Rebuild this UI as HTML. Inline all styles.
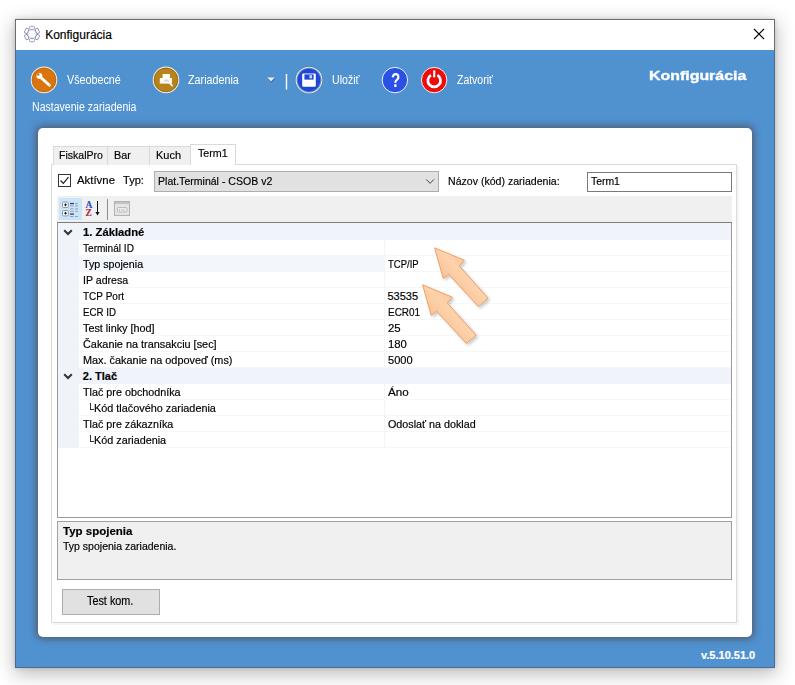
<!DOCTYPE html>
<html><head><meta charset="utf-8"><title>Konfigurácia</title>
<style>
*{box-sizing:border-box;margin:0;padding:0}
html,body{width:795px;height:685px;overflow:hidden;background:#fff;font-family:"Liberation Sans",sans-serif;}
body{position:relative}
.abs,.t,div,svg{position:absolute}
.t{white-space:pre;transform-origin:0 50%;-webkit-text-stroke:.18px currentColor;}
#win{left:15px;top:19px;width:760px;height:649px;background:#5091d0;border:1px solid #4a6b94;border-top-color:#6c6c6c;box-shadow:0 5px 18px 1px rgba(0,0,0,.27),0 0 4px rgba(0,0,0,.15);}
#title{left:16px;top:20px;width:758px;height:30px;background:#fff}
#panel{left:38px;top:128px;width:714px;height:509px;background:#fff;border-radius:5px;box-shadow:0 0 7px 1.5px rgba(80,86,100,.9);}
#pane{left:51px;top:164px;width:686px;height:459px;border:1px solid #dadada;background:#fff}
#pane2{left:737px;top:166px;width:2px;height:459px;background:#f5f5f5}
#pane3{left:53px;top:623px;width:686px;height:2px;background:#f5f5f5}
.tab{top:146px;height:19px;background:#f0f0f0;border:1px solid #d9d9d9;border-bottom:none}
#tabA{left:190px;top:144px;width:46px;height:21px;background:#fff;border:1px solid #d9d9d9;border-bottom:none}
#cb{left:58px;top:174px;width:13px;height:13px;border:1px solid #333;background:#fff}
#combo{left:154px;top:171px;width:285px;height:21px;background:#e1e1e1;border:1px solid #adadad}
#tbox{left:587px;top:172px;width:145px;height:20px;background:#fff;border:1px solid #7a7a7a}
#pgbar{left:57px;top:196px;width:675px;height:26px;background:#f0f0f0}
#pgsel{left:59px;top:198px;width:23px;height:22px;background:#cce4f7;}
#pgsep{left:107px;top:199px;width:1px;height:21px;background:#8d8d8d}
#grid{left:57px;top:222px;width:675px;height:296px;border:1px solid #9a9a9a;border-top-color:#7d7d7d;background:#fff}
#margin{left:58px;top:223px;width:21px;height:225px;background:#f0f4fa}
.cat{left:58px;width:673px;height:17px;background:#f0f4fa}
.hl{left:79px;width:652px;height:1px;background:#f5f7fb}
#vl{left:384px;top:240px;width:1px;height:208px;background:#f1f4fa}
#selrow{left:79px;top:256px;width:305px;height:15px;background:#f3f6fb}
#desc{left:57px;top:521px;width:675px;height:59px;background:#f0f0f0;border:1px solid #a0a0a0}
#btn{left:62px;top:589px;width:98px;height:26px;background:#e1e1e1;border:1px solid #adadad}
#tbl,#tbr{top:19px;width:1px;height:31px;background:#6a6d72}
#tbl{left:15px}#tbr{left:774px}
.ell{left:90px;width:4px;height:7px;border-left:1px solid #333;border-bottom:1px solid #333}

</style></head>
<body>
<div id="win"></div>
<div id="title"></div><div id="tbl"></div><div id="tbr"></div>
<svg id="ticon" style="left:22px;top:24px" width="20" height="20" viewBox="0 0 20 20" fill="none" stroke="#8c94b4" stroke-width="0.9">
 <g transform="translate(10,10)">
  <circle r="4.3" stroke="#b4bad2" stroke-width=".8"/>
  <rect x="-2.5" y="-7.7" width="5" height="3.1" rx="1.1"/>
  <rect x="-2.5" y="-7.7" width="5" height="3.1" rx="1.1" transform="rotate(60)"/>
  <rect x="-2.5" y="-7.7" width="5" height="3.1" rx="1.1" transform="rotate(120)"/>
  <rect x="-2.5" y="-7.7" width="5" height="3.1" rx="1.1" transform="rotate(180)"/>
  <rect x="-2.5" y="-7.7" width="5" height="3.1" rx="1.1" transform="rotate(240)"/>
  <rect x="-2.5" y="-7.7" width="5" height="3.1" rx="1.1" transform="rotate(300)"/>
 </g>
</svg>
<svg id="xclose" style="left:753px;top:28px" width="12" height="12" viewBox="0 0 12 12" stroke="#000" stroke-width="1.1"><path d="M1 1L11 11M11 1L1 11"/></svg>

<!-- toolbar icons -->
<svg id="icons" style="left:15px;top:50px" width="500" height="60" viewBox="15 50 500 60">
 <!-- wrench -->
 <circle cx="44" cy="79.9" r="12.7" fill="#da750d" stroke="#f7e6cf" stroke-width="1.2"/>
 <circle cx="44" cy="79.9" r="11.9" fill="none" stroke="#9a4e04" stroke-width=".6" opacity=".75"/>
 <g fill="#fff" stroke="none">
   <path d="M40.6 77.2 L49.4 85.2" stroke="#fff" stroke-width="2.9" stroke-linecap="round"/>
   <circle cx="39.4" cy="75.9" r="2.9"/>
   <circle cx="38.2" cy="74.5" r="1.35" fill="#da750d"/>
   <circle cx="49.3" cy="85.1" r=".7" fill="#d8b890"/>
 </g>
 <!-- devices -->
 <circle cx="166" cy="79.9" r="12.7" fill="#b8821c" stroke="#f5ead2" stroke-width="1.2"/>
 <circle cx="166" cy="79.9" r="11.9" fill="none" stroke="#6e4a06" stroke-width=".6" opacity=".75"/>
 <g fill="#fffaf0">
  <rect x="162.6" y="74" width="7.3" height="4.5"/>
  <rect x="159.8" y="78" width="12.2" height="5.6"/>
  <path d="M167.2 80.2 L172.6 86.2" stroke="#fff" stroke-width="1.6"/>
  <path d="M165 79.6 l3 0 l1.6 1.8 l-6 0z" fill="#d8d0e8"/>
 </g>
 <!-- dropdown arrow -->
 <path d="M267.6 78.4 h7.6 l-3.8 4.4z" fill="#3a5c88" opacity=".8"/><path d="M267.3 77.5 h7.4 l-3.7 3.9z" fill="#e8edf5"/>
 <!-- separator -->
 <rect x="285.8" y="74" width="1.4" height="15.5" fill="#fff"/>
 <!-- save -->
 <circle cx="309" cy="80.1" r="13.5" fill="none" stroke="#1c3a78" stroke-width=".7" opacity=".55"/><circle cx="309" cy="80.1" r="12.9" fill="none" stroke="#ece6dc" stroke-width="1.1"/>
 <circle cx="309" cy="80.1" r="11.3" fill="#2046d8"/>
 <rect x="302.2" y="73.4" width="13.6" height="13.3" rx="1" fill="#fff"/>
 <rect x="304.4" y="74.4" width="9.2" height="5.2" fill="#2046d8"/>
 <rect x="309.4" y="75.2" width="2.6" height="3.2" fill="#c8d0f0"/>
 <!-- help -->
 <circle cx="394.9" cy="80.1" r="12.7" fill="#2a50e6" stroke="#eef0fa" stroke-width="1"/>
 <!-- close -->
 <circle cx="434.15" cy="80.1" r="12.7" fill="#ec0c0c" stroke="#faeeee" stroke-width="1"/>
 <path d="M431.0 75.1 A6.35 6.35 0 1 0 437.4 75.1" fill="none" stroke="#fff" stroke-width="2.7"/>
 <path d="M434.2 70.4 v6.9" stroke="#fff" stroke-width="2.2"/>
</svg>
<span class="t" style="left:390.8px;top:68.3px;font-size:20px;line-height:24px;font-weight:700;color:#fff;-webkit-text-stroke:0;transform:scaleX(.76)">?</span>

<div id="panel"></div>
<div id="pane"></div><div id="pane2"></div><div id="pane3"></div>
<div class="tab" style="left:53px;width:55px"></div>
<div class="tab" style="left:107px;width:43px"></div>
<div class="tab" style="left:149px;width:42px"></div>
<div id="tabA"></div>
<div id="cb"></div>
<svg style="left:58px;top:174px" width="13" height="13" viewBox="0 0 13 13" fill="none" stroke="#222" stroke-width="1.2"><path d="M2.5 6.5 L5.3 9.3 L10.5 3.2"/></svg>
<div id="combo"></div>
<svg style="left:424px;top:177px" width="12" height="9" viewBox="0 0 12 9" fill="none" stroke="#444" stroke-width="1"><path d="M2.2 2.4 L6.1 6.3 L10 2.4"/></svg>
<div id="tbox"></div>
<div id="pgbar"></div><div id="pgsel"></div><div id="pgsep"></div>
<svg id="pgicons" style="left:57px;top:196px" width="90" height="26" viewBox="57 196 90 26">
 <g fill="#fdfdff" stroke="#7f8ea8" stroke-width=".9">
  <rect x="62.5" y="202.1" width="5.8" height="5.4" rx="1"/><rect x="62.5" y="210.5" width="5.8" height="5.4" rx="1"/>
 </g>
 <g fill="#111"><rect x="64.2" y="204.3" width="2.6" height="1"/><rect x="65" y="203.5" width="1" height="2.6"/>
 <rect x="64.2" y="212.7" width="2.6" height="1"/><rect x="65" y="211.9" width="1" height="2.6"/></g>
 <g fill="#3a4458"><rect x="70" y="202.9" width="4" height="1.3"/><rect x="70" y="213.4" width="4" height="1.3"/></g>
 <g fill="#8fa3c4">
  <rect x="75" y="203.1" width="3" height="1"/>
  <rect x="70" y="205.4" width="3.6" height="1"/><rect x="75" y="205.4" width="3" height="1"/>
  <rect x="70" y="208.4" width="3.6" height="1"/><rect x="75" y="208.4" width="3" height="1"/>
  <rect x="70" y="210.8" width="3.6" height="1"/><rect x="75" y="210.8" width="3" height="1"/>
  <rect x="70" y="216" width="3.6" height="1"/><rect x="75" y="216" width="3" height="1"/>
 </g>
 <path d="M97.5 201 v13" stroke="#111" stroke-width="1"/><path d="M95.4 212 l2.1 3.4 l2.1 -3.4z" fill="#111"/>
 <rect x="114.5" y="201.500" width="15" height="14" fill="#e4e4e4" stroke="#b2b2b2"/>
 <rect x="115" y="202" width="14" height="2" fill="#c2c2c2"/>
 <rect x="117.500" y="207.500" width="9.5" height="4.500" rx=".8" fill="#eee" stroke="#bcbcbc"/>
 <rect x="119" y="209.500" width="1" height="1" fill="#999"/><rect x="121" y="209.500" width="4" height="1" fill="#bbb"/>
</svg>
<span class="t" style="left:85.4px;top:198.8px;font-size:9.5px;line-height:12px;font-weight:700;color:#3350b8;font-family:'Liberation Serif',serif">A</span>
<span class="t" style="left:85.6px;top:207.2px;font-size:9.5px;line-height:12px;font-weight:700;color:#a63346;font-family:'Liberation Serif',serif">Z</span>
<div id="grid"></div>
<div id="margin"></div>
<div class="cat" style="top:223px"></div>
<div class="cat" style="top:367px"></div>
<div id="selrow"></div>
<div id="vl"></div>
<div class="hl" style="top:255px"></div>
<div class="hl" style="top:271px"></div>
<div class="hl" style="top:287px"></div>
<div class="hl" style="top:303px"></div>
<div class="hl" style="top:319px"></div>
<div class="hl" style="top:335px"></div>
<div class="hl" style="top:351px"></div>
<div class="hl" style="top:367px"></div>
<div class="hl" style="top:399px"></div>
<div class="hl" style="top:415px"></div>
<div class="hl" style="top:431px"></div>
<div class="hl" style="top:447px"></div>

<svg style="left:62.6px;top:228.8px" width="12" height="8" viewBox="0 0 12 8" fill="none" stroke="#333" stroke-width="2"><path d="M1.2 1.2 L5 5 L8.8 1.2"/></svg>
<svg style="left:62.6px;top:372.8px" width="12" height="8" viewBox="0 0 12 8" fill="none" stroke="#333" stroke-width="2"><path d="M1.2 1.2 L5 5 L8.8 1.2"/></svg>
<div class="ell" style="top:403px"></div><div class="ell" style="top:435px"></div>
<div id="desc"></div>
<div id="btn"></div>
<svg id="arrows" style="left:400px;top:230px" width="120" height="130" viewBox="400 230 120 130">
<defs>
<linearGradient id="ag" gradientUnits="userSpaceOnUse" x1="440" y1="290" x2="480" y2="254">
<stop offset="0" stop-color="#f9b988"/><stop offset=".5" stop-color="#fdd2ac"/><stop offset="1" stop-color="#f9b988"/></linearGradient>
<linearGradient id="ag2" gradientUnits="userSpaceOnUse" x1="428" y1="327" x2="468" y2="291">
<stop offset="0" stop-color="#f9b988"/><stop offset=".5" stop-color="#fdd2ac"/><stop offset="1" stop-color="#f9b988"/></linearGradient>
<filter id="sh" x="-20%" y="-20%" width="150%" height="150%"><feGaussianBlur in="SourceAlpha" stdDeviation="1.8"/><feOffset dx="1.5" dy="2"/><feComponentTransfer><feFuncA type="linear" slope=".2"/></feComponentTransfer><feMerge><feMergeNode/><feMergeNode in="SourceGraphic"/></feMerge></filter>
</defs>
<polygon points="434.6,247.8 464.4,260.2 459.3,266.0 488.1,298.0 478.4,306.5 448.7,274.2 443.2,278.4" fill="url(#ag)" stroke="#ea9a5c" stroke-width=".9" stroke-linejoin="round" filter="url(#sh)"/>
<polygon points="422.6,284.8 452.4,297.2 447.3,303.0 476.1,335.0 466.4,343.5 436.7,311.2 431.2,315.4" fill="url(#ag2)" stroke="#ea9a5c" stroke-width=".9" stroke-linejoin="round" filter="url(#sh)"/>
</svg>

<span class="t" style="left:45.20px;top:25.84px;font-size:12px;line-height:18px;color:#000;">Konfigurácia</span>
<span class="t" style="left:66.70px;top:70.54px;font-size:12px;line-height:18px;color:#fff;-webkit-text-stroke:0;transform:scaleX(0.8960);">Všeobecné</span>
<span class="t" style="left:188.20px;top:70.54px;font-size:12px;line-height:18px;color:#fff;-webkit-text-stroke:0;transform:scaleX(0.8959);">Zariadenia</span>
<span class="t" style="left:332.30px;top:70.54px;font-size:12px;line-height:18px;color:#fff;-webkit-text-stroke:0;transform:scaleX(0.8822);">Uložiť</span>
<span class="t" style="left:456.90px;top:70.54px;font-size:12px;line-height:18px;color:#fff;-webkit-text-stroke:0;transform:scaleX(0.8716);">Zatvoriť</span>
<span class="t" style="left:32.30px;top:98.04px;font-size:12px;line-height:18px;color:#fff;-webkit-text-stroke:0;transform:scaleX(0.8800);">Nastavenie zariadenia</span>
<span class="t" style="left:649.40px;top:65.50px;font-size:13px;line-height:20px;color:#fff;font-weight:700;-webkit-text-stroke:.35px #fff;transform:scaleX(1.2244);">Konfigurácia</span>
<span class="t" style="left:701.00px;top:647.19px;font-size:11px;line-height:16px;color:#fff;font-weight:700;">v.5.10.51.0</span>
<span class="t" style="left:58.50px;top:146.72px;font-size:11.5px;line-height:17px;color:#000;transform:scaleX(0.9158);">FiskalPro</span>
<span class="t" style="left:113.50px;top:146.72px;font-size:11.5px;line-height:17px;color:#000;transform:scaleX(0.9438);">Bar</span>
<span class="t" style="left:155.70px;top:146.72px;font-size:11.5px;line-height:17px;color:#000;transform:scaleX(0.9535);">Kuch</span>
<span class="t" style="left:197.90px;top:145.22px;font-size:11.5px;line-height:17px;color:#000;transform:scaleX(0.9295);">Term1</span>
<span class="t" style="left:76.60px;top:171.92px;font-size:11.5px;line-height:17px;color:#000;transform:scaleX(0.9906);">Aktívne</span>
<span class="t" style="left:122.50px;top:171.92px;font-size:11.5px;line-height:17px;color:#000;transform:scaleX(0.9616);">Typ:</span>
<span class="t" style="left:157.70px;top:172.82px;font-size:11.5px;line-height:17px;color:#000;transform:scaleX(0.9172);">Plat.Terminál - CSOB v2</span>
<span class="t" style="left:447.90px;top:172.72px;font-size:11.5px;line-height:17px;color:#000;transform:scaleX(0.9189);">Názov (kód) zariadenia:</span>
<span class="t" style="left:590.50px;top:172.82px;font-size:11.5px;line-height:17px;color:#000;transform:scaleX(0.9044);">Term1</span>
<span class="t" style="left:82.80px;top:223.69px;font-size:11px;line-height:16px;color:#000;font-weight:700;transform:scaleX(1.0230);">1. Základné</span>
<span class="t" style="left:82.80px;top:239.69px;font-size:11px;line-height:16px;color:#000;transform:scaleX(0.9151);">Terminál ID</span>
<span class="t" style="left:82.80px;top:255.69px;font-size:11px;line-height:16px;color:#000;transform:scaleX(0.9730);">Typ spojenia</span>
<span class="t" style="left:82.80px;top:271.69px;font-size:11px;line-height:16px;color:#000;transform:scaleX(0.9618);">IP adresa</span>
<span class="t" style="left:82.80px;top:287.69px;font-size:11px;line-height:16px;color:#000;transform:scaleX(0.9105);">TCP Port</span>
<span class="t" style="left:82.80px;top:303.69px;font-size:11px;line-height:16px;color:#000;transform:scaleX(0.8852);">ECR ID</span>
<span class="t" style="left:82.80px;top:319.69px;font-size:11px;line-height:16px;color:#000;transform:scaleX(0.9826);">Test linky [hod]</span>
<span class="t" style="left:82.80px;top:335.69px;font-size:11px;line-height:16px;color:#000;transform:scaleX(0.9886);">Čakanie na transakciu [sec]</span>
<span class="t" style="left:82.80px;top:351.69px;font-size:11px;line-height:16px;color:#000;transform:scaleX(0.9897);">Max. čakanie na odpoveď (ms)</span>
<span class="t" style="left:82.80px;top:367.69px;font-size:11px;line-height:16px;color:#000;font-weight:700;">2. Tlač</span>
<span class="t" style="left:82.80px;top:383.69px;font-size:11px;line-height:16px;color:#000;transform:scaleX(0.9792);">Tlač pre obchodníka</span>
<span class="t" style="left:94.00px;top:399.69px;font-size:11px;line-height:16px;color:#000;transform:scaleX(0.9868);">Kód tlačového zariadenia</span>
<span class="t" style="left:82.80px;top:415.69px;font-size:11px;line-height:16px;color:#000;transform:scaleX(0.9780);">Tlač pre zákazníka</span>
<span class="t" style="left:94.00px;top:431.69px;font-size:11px;line-height:16px;color:#000;transform:scaleX(0.9824);">Kód zariadenia</span>
<span class="t" style="left:387.50px;top:255.69px;font-size:11px;line-height:16px;color:#000;transform:scaleX(0.8631);">TCP/IP</span>
<span class="t" style="left:387.50px;top:287.69px;font-size:11px;line-height:16px;color:#000;">53535</span>
<span class="t" style="left:387.50px;top:303.69px;font-size:11px;line-height:16px;color:#000;transform:scaleX(0.9050);">ECR01</span>
<span class="t" style="left:387.50px;top:319.69px;font-size:11px;line-height:16px;color:#000;transform:scaleX(1.0367);">25</span>
<span class="t" style="left:387.50px;top:335.69px;font-size:11px;line-height:16px;color:#000;transform:scaleX(1.0294);">180</span>
<span class="t" style="left:387.50px;top:351.69px;font-size:11px;line-height:16px;color:#000;transform:scaleX(1.0047);">5000</span>
<span class="t" style="left:387.50px;top:383.69px;font-size:11px;line-height:16px;color:#000;transform:scaleX(1.0573);">Áno</span>
<span class="t" style="left:387.50px;top:415.69px;font-size:11px;line-height:16px;color:#000;transform:scaleX(0.9772);">Odoslať na doklad</span>
<span class="t" style="left:62.90px;top:523.29px;font-size:11px;line-height:16px;color:#000;font-weight:700;transform:scaleX(1.0448);">Typ spojenia</span>
<span class="t" style="left:62.90px;top:537.89px;font-size:11px;line-height:16px;color:#000;transform:scaleX(0.9558);">Typ spojenia zariadenia.</span>
<span class="t" style="left:87.20px;top:592.14px;font-size:12px;line-height:18px;color:#000;transform:scaleX(0.9034);">Test kom.</span>
</body></html>
